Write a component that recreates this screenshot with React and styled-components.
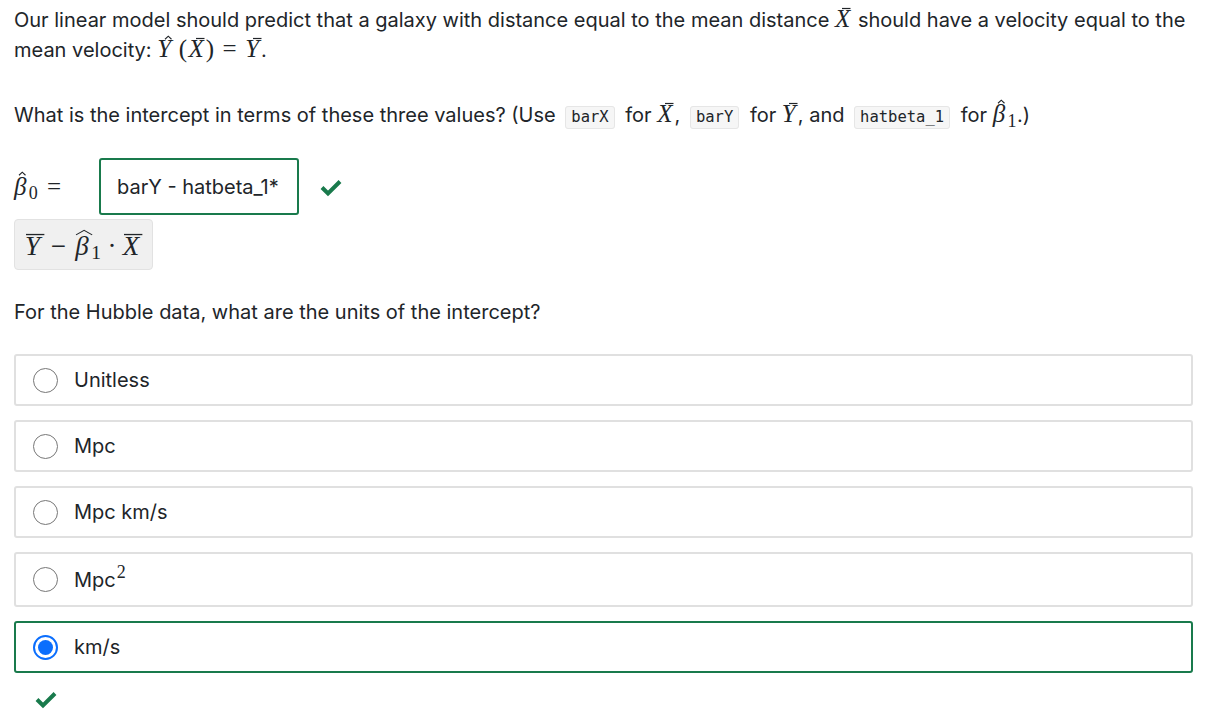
import React from "react";
import styled, { createGlobalStyle } from "styled-components";

const Global = createGlobalStyle`
  html, body { margin: 0; padding: 0; background: #fff; }
  body { font-family: Inter, "Noto Sans", sans-serif; color: #212529; }
`;

const Page = styled.div`
  padding: 5px 16px 0 14px;
  font-size: 20px;
  line-height: 30px;
`;

const P = styled.p`
  margin: 0 0 ${(p) => p.$mb || 0}px 0;
`;

const M = styled.span`
  font-family: "Liberation Serif", serif;
  font-size: ${(p) => p.$size || 25}px;
  line-height: 1;
  white-space: nowrap;
  letter-spacing: 0.02em;
`;

const Acc = styled.span`
  position: relative;
  display: inline-block;
  font-style: italic;
  line-height: 1;
  padding-right: 0.06em;
`;

const AccMark = styled.svg`
  position: absolute;
  left: ${(p) => p.$l}em;
  top: ${(p) => p.$t}em;
  width: ${(p) => p.$w}em;
  height: ${(p) => p.$h || 0.14}em;
  overflow: visible;
`;

const Var = ({ ch, bar, hat, wide }) => {
  const isBeta = ch === "β";
  return (
    <Acc>
      {ch}
      {bar && (
        wide ? (
          <AccMark $l={0.04} $t={0.04} $w={0.68} $h={0.04} viewBox="0 0 10 2" preserveAspectRatio="none">
            <line x1="0" y1="1" x2="10" y2="1" stroke="currentColor" vectorEffect="non-scaling-stroke" style={{ strokeWidth: 1.3 }} />
          </AccMark>
        ) : (
          <AccMark $l={0.3} $t={0.08} $w={0.34} $h={0.04} viewBox="0 0 10 2" preserveAspectRatio="none">
            <line x1="0" y1="1" x2="10" y2="1" stroke="currentColor" vectorEffect="non-scaling-stroke" style={{ strokeWidth: 1.2 }} />
          </AccMark>
        )
      )}
      {hat && (
        wide ? (
          <AccMark $l={0.02} $t={-0.1} $w={0.6} $h={0.18} viewBox="0 0 10 3" preserveAspectRatio="none">
            <polyline points="0,3 5,0.2 10,3" fill="none" stroke="currentColor" vectorEffect="non-scaling-stroke" style={{ strokeWidth: 1.1 }} />
          </AccMark>
        ) : (
          <AccMark $l={isBeta ? 0.2 : 0.32} $t={isBeta ? -0.06 : 0.0} $w={0.26} $h={0.13} viewBox="0 0 10 3" preserveAspectRatio="none">
            <polyline points="0,3 5,0.2 10,3" fill="none" stroke="currentColor" vectorEffect="non-scaling-stroke" style={{ strokeWidth: 1.1 }} />
          </AccMark>
        )
      )}
    </Acc>
  );
};

const Op = styled.span`
  margin: 0 ${(p) => p.$sp ?? 0.22}em 0 ${(p) => p.$spl ?? p.$sp ?? 0.22}em;
`;

const Sub = styled.sub`
  font-size: 0.72em;
  vertical-align: -0.25em;
  line-height: 0;
  margin-left: 0.02em;
`;

const Code = styled.code`
  font-family: "DejaVu Sans Mono", monospace;
  font-size: 15.5px;
  background: #f6f6f6;
  border: 1px solid #e6e6e6;
  border-radius: 3px;
  padding: 1px 5px 2px;
  margin: 0 5px 0 4px;
  color: #212529;
`;

const AnswerRow = styled.div`
  display: flex;
  align-items: center;
  margin-top: 26px;
  height: 57px;
`;

const Label = styled.div`
  width: 85px;
  padding-top: 2px;
`;

const Input = styled.div`
  box-sizing: border-box;
  width: 200px;
  height: 57px;
  border: 2px solid #197a4c;
  border-radius: 3px;
  display: flex;
  align-items: center;
  padding-left: 16px;
  font-size: 20px;
`;

const CheckWrap = styled.span`
  display: inline-flex;
  margin-left: ${(p) => p.$ml || 0}px;
  color: #197a4c;
`;

const Preview = styled.div`
  display: inline-flex;
  align-items: center;
  box-sizing: border-box;
  margin-top: 4px;
  height: 51px;
  padding: 3px 10px 0 10px;
  background: #f0f0f0;
  border: 1px solid #e2e2e2;
  border-radius: 4px;
`;

const Question = styled.p`
  margin: 27px 0 27px 0;
`;

const Options = styled.div`
  display: flex;
  flex-direction: column;
  gap: 14px;
`;

const Option = styled.label`
  box-sizing: border-box;
  display: flex;
  align-items: center;
  min-height: ${(p) => p.$h || 52}px;
  border: ${(p) => (p.$correct ? "2px solid #197a4c" : "2px solid #e0e0e0")};
  border-radius: 3px;
  padding-left: 17px;
  gap: 16px;
`;

const Radio = styled.span`
  box-sizing: border-box;
  width: 25px;
  height: 25px;
  border-radius: 50%;
  border: ${(p) => (p.$checked ? "2px solid #0b6efd" : "1px solid #777")};
  display: flex;
  align-items: center;
  justify-content: center;
  &::after {
    content: "";
    display: ${(p) => (p.$checked ? "block" : "none")};
    width: 15px;
    height: 15px;
    border-radius: 50%;
    background: #0b6efd;
  }
`;

const OptText = styled.span`
  font-size: 20px;
`;

const Sup = styled.sup`
  font-family: "Liberation Serif", serif;
  font-size: 0.9em;
  line-height: 0;
  vertical-align: 0.5em;
  margin-left: 1px;
`;

const Bottom = styled.div`
  margin: 14px 0 0 20px;
`;

const Check = ({ size = 24 }) => (
  <svg width={size} height={size} viewBox="0 0 24 24">
    <path d="M3 12.5 L9 18.5 L21 6.5" fill="none" stroke="currentColor" strokeWidth="4" />
  </svg>
);

const options = [
  { label: "Unitless" },
  { label: "Mpc" },
  { label: "Mpc km/s" },
  { label: <>Mpc<Sup>2</Sup></>, h: 55 },
  { label: "km/s", checked: true },
];

export default function App() {
  return (
    <>
      <Global />
      <Page>
        <P $mb={35}>
          Our linear model should predict that a galaxy with distance equal to the mean distance{" "}
          <M><Var ch="X" bar /></M> should have a velocity equal to the mean velocity:{" "}
          <M>
            <Var ch="Y" hat /><Op $sp={0.04} $spl={0.22}>(</Op><Var ch="X" bar />)<Op $sp={0.32}>=</Op><Var ch="Y" bar />
          </M>
          .
        </P>
        <P>
          What is the intercept in terms of these three values? (Use <Code>barX</Code> for{" "}
          <M><Var ch="X" bar /></M>, <Code>barY</Code> for <M><Var ch="Y" bar /></M>, and{" "}
          <Code>hatbeta_1</Code> for <M><Var ch="β" hat /><Sub>1</Sub></M>.)
        </P>
        <AnswerRow>
          <Label>
            <M><Var ch="β" hat /><Sub>0</Sub><Op $sp={0.35}>=</Op></M>
          </Label>
          <Input>barY - hatbeta_1*</Input>
          <CheckWrap $ml={20}><Check /></CheckWrap>
        </AnswerRow>
        <Preview>
          <M $size={27}>
            <Var ch="Y" bar wide /><Op $sp={0.32}>−</Op><Var ch="β" hat wide /><Sub>1</Sub><Op $sp={0.22}>·</Op><Var ch="X" bar wide />
          </M>
        </Preview>
        <Question>For the Hubble data, what are the units of the intercept?</Question>
        <Options>
          {options.map((o, i) => (
            <Option key={i} $correct={o.checked} $h={o.h}>
              <Radio $checked={o.checked} />
              <OptText>{o.label}</OptText>
            </Option>
          ))}
        </Options>
        <Bottom>
          <CheckWrap><Check /></CheckWrap>
        </Bottom>
      </Page>
    </>
  );
}
